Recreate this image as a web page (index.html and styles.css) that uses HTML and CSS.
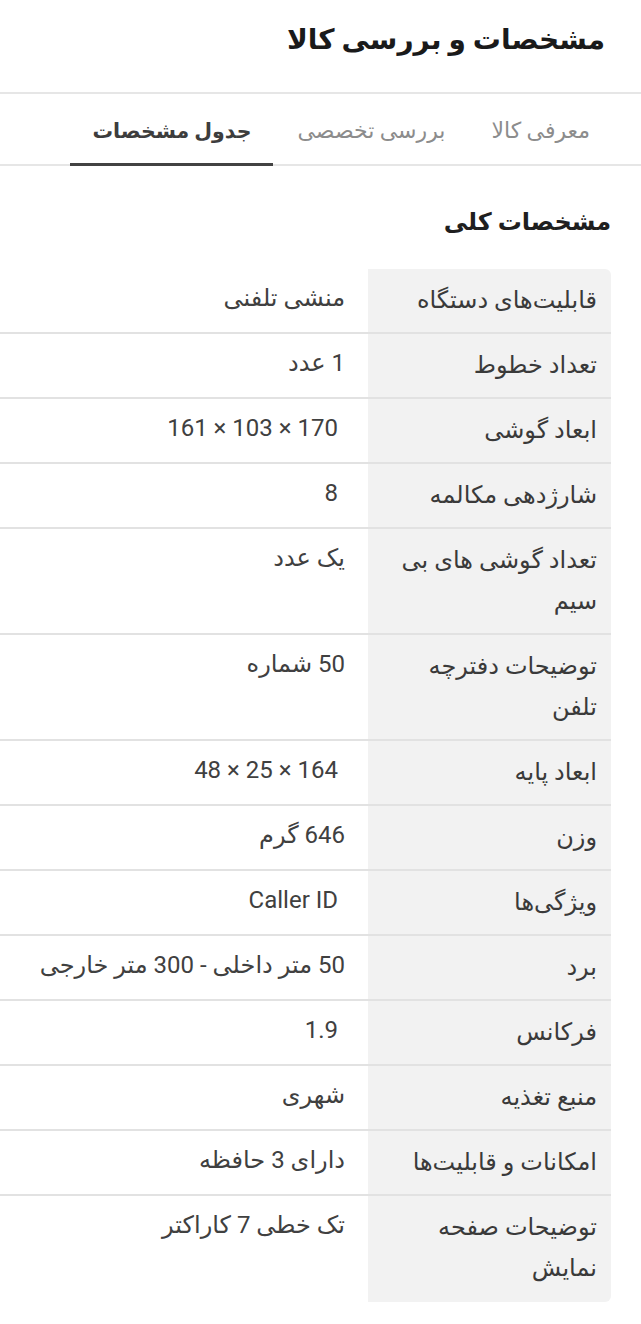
FILE: index.html
```html
<!DOCTYPE html>
<html lang="fa" dir="rtl">
<head>
<meta charset="utf-8">
<title>مشخصات و بررسی کالا</title>
<link rel="stylesheet" href="styles.css">
</head>
<body>
<header class="page-head">
  <h1 class="page-title">مشخصات و بررسی کالا</h1>
</header>
<nav class="tabs">
  <div class="tab">معرفی کالا</div>
  <div class="tab">بررسی تخصصی</div>
  <div class="tab active">جدول مشخصات</div>
</nav>
<section class="specs">
  <h2 class="specs-title">مشخصات کلی</h2>
  <div class="table">
    <div class="row"><div class="label">قابلیت‌های دستگاه</div><div class="value">منشی تلفنی</div></div>
    <div class="row"><div class="label">تعداد خطوط</div><div class="value">1 عدد</div></div>
    <div class="row"><div class="label">ابعاد گوشی</div><div class="value num">170 × 103 × 161</div></div>
    <div class="row"><div class="label">شارژدهی مکالمه</div><div class="value num">8</div></div>
    <div class="row"><div class="label">تعداد گوشی های بی سیم</div><div class="value">یک عدد</div></div>
    <div class="row"><div class="label">توضیحات دفترچه تلفن</div><div class="value">50 شماره</div></div>
    <div class="row"><div class="label">ابعاد پایه</div><div class="value num">164 × 25 × 48</div></div>
    <div class="row"><div class="label">وزن</div><div class="value">646 گرم</div></div>
    <div class="row"><div class="label">ویژگی‌ها</div><div class="value num">Caller ID</div></div>
    <div class="row"><div class="label">برد</div><div class="value">50 متر داخلی - 300 متر خارجی</div></div>
    <div class="row"><div class="label">فرکانس</div><div class="value num">1.9</div></div>
    <div class="row"><div class="label">منبع تغذیه</div><div class="value">شهری</div></div>
    <div class="row"><div class="label">امکانات و قابلیت‌ها</div><div class="value">دارای 3 حافظه</div></div>
    <div class="row"><div class="label">توضیحات صفحه نمایش</div><div class="value">تک خطی 7 کاراکتر</div></div>
  </div>
</section>
</body>
</html>
```
FILE: styles.css
```css
* { box-sizing: border-box; }
html, body { margin: 0; padding: 0; background: #fff; }
body {
  direction: rtl;
  font-family: Roboto, "DejaVu Sans", sans-serif;
  color: #424242;
  width: 641px;
}
.page-head {
  height: 94px;
  border-bottom: 2px solid #e6e6e6;
  padding: 20px 36px 0 0;
}
.page-title {
  margin: 0;
  font-size: 28px;
  line-height: 40px;
  font-weight: bold;
  color: #1a1a1a;
}
.tabs {
  display: flex;
  height: 72px;
  border-bottom: 2px solid #e6e6e6;
  padding-right: 29px;
}
.tab {
  display: flex;
  align-items: center;
  padding: 0 22px;
  margin-left: 2px;
  font-size: 22px;
  color: #8c8c8c;
  border-bottom: 3px solid transparent;
  margin-bottom: -2px;
  padding-top: 4px;
}
.tab.active {
  color: #3d3d3d;
  font-size: 20.5px;
  font-weight: bold;
  border-bottom-color: #424242;
}
.specs { padding: 38px 30px 0 0; }
.specs-title {
  margin: 0 0 29px;
  font-size: 24px;
  line-height: 36px;
  font-weight: bold;
  color: #1f1f1f;
}
.table { display: flex; flex-direction: column; }
.row {
  display: flex;
  border-bottom: 2px solid #e2e2e2;
}
.row:last-child { border-bottom: none; }
.label {
  flex: 0 0 243px;
  background: #f2f2f2;
  padding: 11px 14px 11px 10px;
  font-size: 24px;
  line-height: 41px;
  color: #3a3a3a;
}
.row:first-child .label { border-top-right-radius: 6px; }
.row:last-child .label { border-bottom-right-radius: 6px; padding-bottom: 13px; }
.value {
  flex: 1;
  padding: 9px 23px 11px 10px;
  font-size: 24px;
  line-height: 41px;
  color: #404040;
}
.value.num { padding-right: 30px; }
```
